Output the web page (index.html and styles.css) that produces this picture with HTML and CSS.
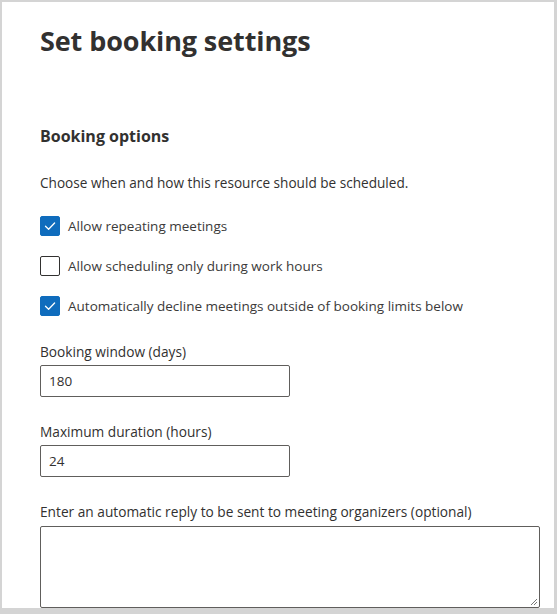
FILE: index.html
```html
<!DOCTYPE html>
<html lang="en">
<head>
<meta charset="utf-8">
<title>Set booking settings</title>
<link rel="stylesheet" href="styles.css">
</head>
<body>
<div class="frame">
  <main class="panel">
    <h1 class="title">Set booking settings</h1>
    <h2 class="section">Booking options</h2>
    <p class="desc">Choose when and how this resource should be scheduled.</p>
    <div class="checks">
      <label class="check">
        <span class="box on"><svg viewBox="0 0 20 20" width="20" height="20"><path d="M5.5 10.2 8.6 13.2 14.6 7" fill="none" stroke="#fff" stroke-width="1.3" stroke-linecap="round" stroke-linejoin="round"/></svg></span>
        <span class="check-label">Allow repeating meetings</span>
      </label>
      <label class="check">
        <span class="box"></span>
        <span class="check-label">Allow scheduling only during work hours</span>
      </label>
      <label class="check">
        <span class="box on"><svg viewBox="0 0 20 20" width="20" height="20"><path d="M5.5 10.2 8.6 13.2 14.6 7" fill="none" stroke="#fff" stroke-width="1.3" stroke-linecap="round" stroke-linejoin="round"/></svg></span>
        <span class="check-label">Automatically decline meetings outside of booking limits below</span>
      </label>
    </div>
    <div class="field first">
      <div class="field-label">Booking window (days)</div>
      <div class="input">180</div>
    </div>
    <div class="field">
      <div class="field-label">Maximum duration (hours)</div>
      <div class="input">24</div>
    </div>
    <div class="field">
      <div class="field-label">Enter an automatic reply to be sent to meeting organizers (optional)</div>
      <div class="textarea">
        <svg class="grip" viewBox="0 0 8 8" width="8" height="8"><path d="M7 1 1 7M7 4 4 7" stroke="#555" stroke-width="0.8"/></svg>
      </div>
    </div>
  </main>
</div>
</body>
</html>
```

FILE: styles.css
```css
* { box-sizing: border-box; }
html, body { margin: 0; padding: 0; }
body {
  width: 557px;
  height: 614px;
  overflow: hidden;
  font-family: "Open Sans", "Noto Sans", sans-serif;
  color: #323130;
  background: #fff;
}
.frame {
  width: 557px;
  height: 614px;
  border-style: solid;
  border-color: #d4d4d4;
  border-width: 2px 3px 6px 2px;
  background: #fff;
  overflow: hidden;
}
.panel {
  padding: 21px 0 0 38px;
}
.title {
  margin: 0;
  font-size: 27px;
  font-weight: 700;
  line-height: 36px;
  letter-spacing: -0.1px;
}
.section {
  margin: 67px 0 0;
  font-size: 16px;
  font-weight: 700;
  line-height: 20px;
}
.desc {
  margin: 28px 0 0;
  font-size: 13.6px;
  line-height: 18px;
}
.checks {
  margin-top: 24px;
  display: flex;
  flex-direction: column;
  gap: 20px;
}
.check {
  display: flex;
  align-items: center;
  gap: 8px;
  height: 20px;
}
.box {
  width: 20px;
  height: 20px;
  border: 1px solid #323130;
  border-radius: 2px;
  display: flex;
  flex: none;
}
.box.on {
  background: #0f6cbd;
  border-color: #0f6cbd;
}
.box svg { margin: -1px; }
.check-label {
  font-size: 13.5px;
  color: #3b3a39;
}
.field { margin-top: 26px; }
.field.first { margin-top: 27px; }
.field-label {
  font-size: 13.7px;
  line-height: 18px;
}
.input {
  margin-top: 4px;
  width: 250px;
  height: 32px;
  border: 1px solid #605e5c;
  border-radius: 2px;
  padding: 0 0 0 8px;
  font-size: 13.5px;
  line-height: 30px;
  color: #323130;
}
.textarea {
  position: relative;
  margin-top: 5px;
  width: 500px;
  height: 82px;
  border: 1px solid #605e5c;
  border-radius: 2px;
}
.grip {
  position: absolute;
  right: 1px;
  bottom: 1px;
}
```
